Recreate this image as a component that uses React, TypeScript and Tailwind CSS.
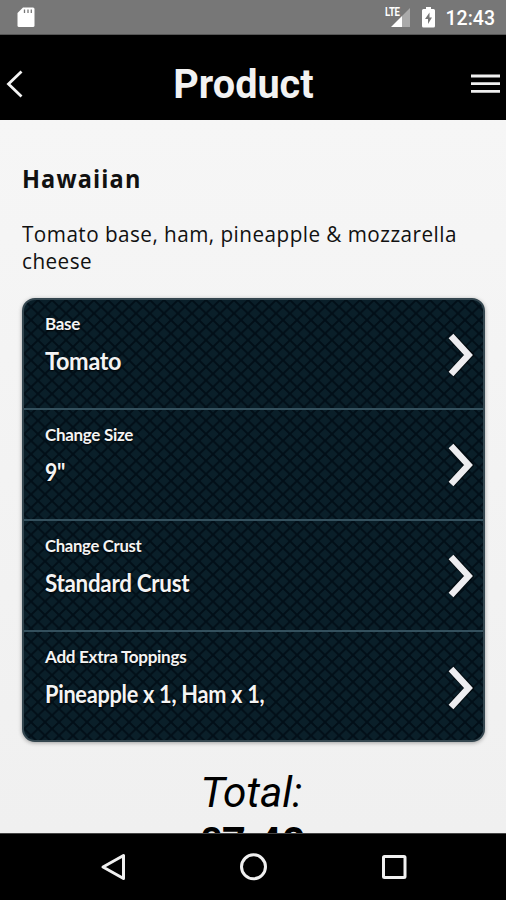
import React from "react";

const options = [
  { label: "Base", value: "Tomato", labelScale: "scale-x-100", valueScale: "scale-x-[.975]", box: "h-[110px] border-b-2", pad: "pt-3" },
  { label: "Change Size", value: '9"', labelScale: "scale-x-100", valueScale: "scale-x-[.88]", box: "h-[111px] border-b-2", pad: "pt-[13px]" },
  { label: "Change Crust", value: "Standard Crust", labelScale: "scale-x-[.98]", valueScale: "scale-x-[.932]", box: "h-[111px] border-b-2", pad: "pt-[13px]" },
  { label: "Add Extra Toppings", value: "Pineapple x 1, Ham x 1,", labelScale: "scale-x-[1.005]", valueScale: "scale-x-[.905]", box: "h-[110px]", pad: "pt-[13px]" },
];

function StatusBar() {
  return (
    <div className="flex h-[35px] shrink-0 items-center justify-between border-b border-[#555] bg-[#777] pl-[17px] pr-[11px] text-white">
      <svg width="18" height="21" viewBox="0 0 18 21" className="mt-px">
        <path d="M6 0.5H16Q17.5 .5 17.5 2V18.500Q17.500 20 16 20H2Q.5 20 .5 18.500V6Z" fill="#fff" />
        <path d="M7.500 2.500V6M11 2.500V6M14.300 2.500V6" stroke="#777" strokeWidth="1.300" />
      </svg>
      <div className="flex items-center">
        <div className="relative mr-3 h-[21px] w-[26px]">
          <span className="absolute left-px top-0 origin-left scale-x-[.8] font-['Roboto',sans-serif] text-[12px] font-bold leading-[10px] tracking-[-0.3px]">LTE</span>
          <svg className="absolute inset-0" width="26" height="21" viewBox="0 0 26 21">
            <path d="M26 1V20H18V9Z" fill="#aaa" />
            <path d="M7 20L18 9V20Z" fill="#fff" />
          </svg>
        </div>
        <svg width="13" height="21" viewBox="0 0 13 21" className="mr-[11px]">
          <path d="M4 0H9V2H11.500Q13 2 13 3.500V19Q13 20.500 11.500 20.500H1.500Q0 20.500 0 19V3.500Q0 2 1.500 2H4Z" fill="#fff" />
          <path d="M7.500 5.500L3 12H6V17L10 10.500H7.500Z" fill="#777" />
        </svg>
        <span className="mt-[3px] font-['Roboto',sans-serif] text-[19.500px] leading-6 font-medium">12:43</span>
      </div>
    </div>
  );
}

function Header() {
  return (
    <header className="grid h-[85px] shrink-0 grid-cols-[40px_1fr_40px] items-center bg-black pl-1.5 pr-[5px] pt-3">
      <svg width="30" height="30" viewBox="0 0 30 30" fill="none">
        <path d="M15.500 2.500L2.500 15L15.500 27.500" stroke="#f4f4f4" strokeWidth="2.800" />
      </svg>
      <h1 className="-ml-5 mt-0.5 scale-x-[.99] text-center font-['Roboto',sans-serif] text-[40px] font-bold leading-[48px] text-[#f2f2f2]">
        Product
      </h1>
      <svg width="30" height="20" viewBox="0 0 30 20" className="justify-self-end">
        <path d="M0 2H29M0 9.700H29M0 17.400H29" stroke="#f0f0f0" strokeWidth="2.800" />
      </svg>
    </header>
  );
}

function Row({ label, value, labelScale, valueScale, box, pad }: (typeof options)[number]) {
  return (
    <div className={"flex items-center justify-between border-[#34505d] pl-[21px] pr-[9px] " + box}>
      <div className={"h-full font-['Lato',sans-serif] font-bold tracking-[-0.3px] text-[#f4f4f4] [text-shadow:0_1px_2px_#000] " + pad}>
        <div className={"h-6 origin-left text-[17px] leading-6 whitespace-nowrap " + labelScale}>{label}</div>
        <div className={"mt-[9px] w-[230px] origin-left text-[24px] leading-8 whitespace-nowrap " + valueScale}>{value}</div>
      </div>
      <svg width="27" height="46" viewBox="0 0 27 46" fill="none" className="mt-px">
        <path d="M4 4L22 23L4 42" stroke="#000" strokeOpacity=".5" strokeWidth="8.500" />
        <path d="M4 4L21.500 23L4 42" stroke="#ededf0" strokeWidth="6.500" />
      </svg>
    </div>
  );
}

function DiamondTexture() {
  return (
    <svg className="absolute inset-0 h-full w-full" aria-hidden="true">
      <defs>
        <pattern id="diamonds" width="14" height="13.400" patternUnits="userSpaceOnUse">
          <path d="M-2 -1.900L16 15.300M-2 15.300L16 -1.900" stroke="#020f18" strokeWidth="2" />
        </pattern>
      </defs>
      <rect width="100%" height="100%" fill="url(#diamonds)" />
    </svg>
  );
}

function NavBar() {
  return (
    <nav className="h-[67px] shrink-0 border-t border-[#444] bg-black">
      <svg width="506" height="66" viewBox="0 834 506 66" fill="none" stroke="#f0f0f0" strokeWidth="3">
        <path d="M103 867L123.500 855.500V878.500Z" strokeLinejoin="round" />
        <circle cx="253.500" cy="866.800" r="12" />
        <rect x="383.500" y="856.500" width="21.500" height="21" rx="1" />
      </svg>
    </nav>
  );
}

export default function App() {
  return (
    <div className="flex h-[900px] w-[506px] flex-col overflow-hidden bg-black">
      <StatusBar />
      <Header />
      <main className="min-h-0 flex-1 overflow-hidden bg-gradient-to-b from-[#f6f6f6] to-[#f0f0f0] pl-[22px] pr-[21px] pt-[42px] text-[#111]">
        <h2 className="h-8 origin-left scale-x-[.94] font-['Open_Sans',sans-serif] text-[25px] font-bold leading-8 tracking-[1.200px]">Hawaiian</h2>
        <p className="mt-[27px] h-[54px] origin-left scale-x-[.92] whitespace-nowrap font-['Open_Sans',sans-serif] text-[22.500px] leading-[26.500px] tracking-[0.500px]">
          Tomato base, ham, pineapple &amp; mozzarella
          <br />
          cheese
        </p>
        <section className="relative mt-[23px] h-[444px] overflow-hidden rounded-[13px] border-2 border-[#34464f] bg-[#0a1f29] shadow-[0_1px_4px_#0005]">
          <DiamondTexture />
          <div className="relative">
            {options.map((option) => (
              <Row key={option.label} {...option} />
            ))}
          </div>
        </section>
        <div className="-ml-1 mt-[25px] text-center font-['Roboto',sans-serif] text-[43px] leading-[50px] text-black">
          <div className="scale-x-[.985] italic">Total:</div>
          <div className="scale-x-[.965] font-bold"><span className="font-medium">£</span>7.40</div>
        </div>
      </main>
      <NavBar />
    </div>
  );
}
